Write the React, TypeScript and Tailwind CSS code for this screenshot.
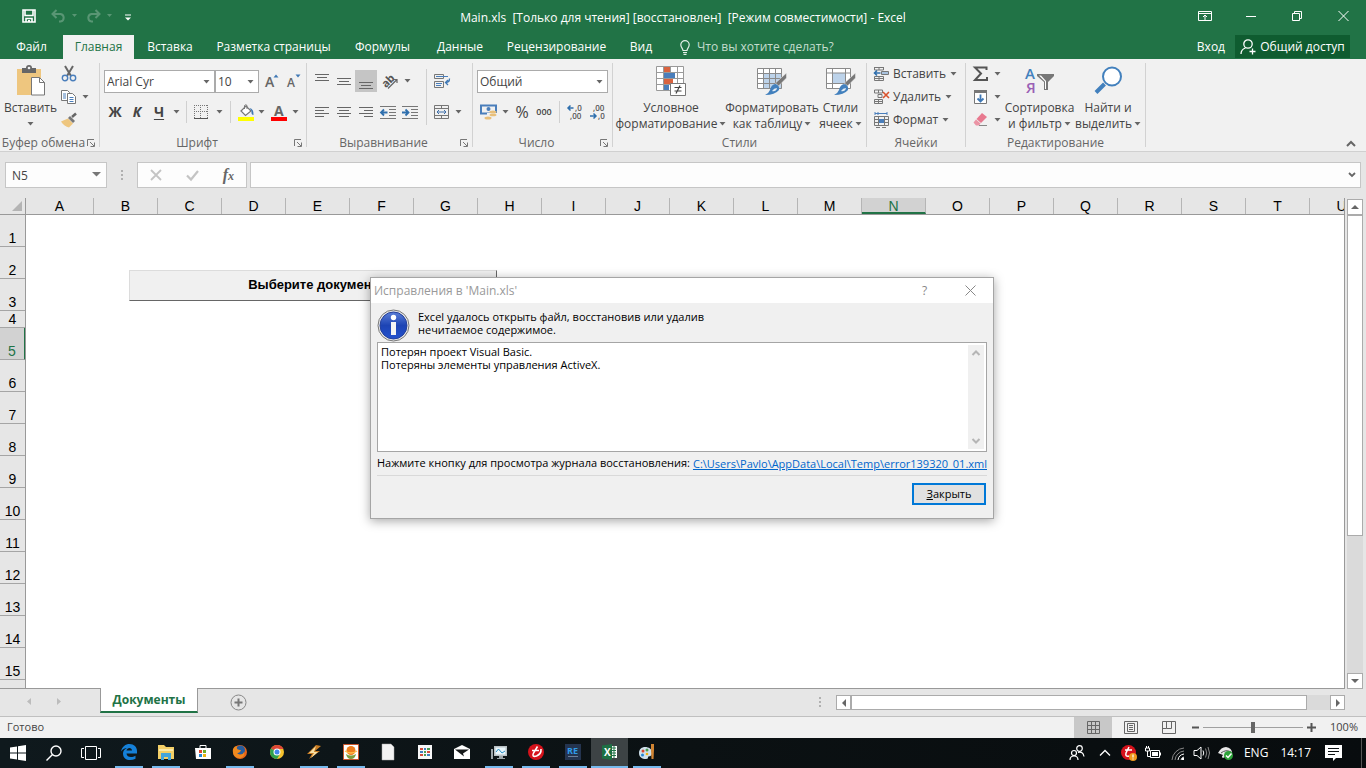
import type { ReactNode } from "react";

const tabs = [
  { label: "Файл", width: "w-[63px]" },
  { label: "Главная", width: "w-[71px]", active: true },
  { label: "Вставка", width: "w-[72px]" },
  { label: "Разметка страницы", width: "w-[135px]" },
  { label: "Формулы", width: "w-[83px]" },
  { label: "Данные", width: "w-[72px]" },
  { label: "Рецензирование", width: "w-[121px]" },
  { label: "Вид", width: "w-12" },
];

const columns = "ABCDEFGHIJKLMNOPQRSTU".split("");
const rows = [1, 2, 3, 4, 5, 6, 7, 8, 9, 10, 11, 12, 13, 14, 15, 16];

export default function App() {
  return (
    <div className="relative flex h-screen flex-col overflow-hidden bg-[#e6e6e6] font-['Open_Sans','Noto_Sans',sans-serif] text-xs text-[#444]">
      <TitleBar />
      <RibbonTabs />
      <Ribbon />
      <FormulaBar />
      <Sheet />
      <SheetTabs />
      <StatusBar />
      <Taskbar />
      <RepairDialog />
    </div>
  );
}

/* ---------- small shared pieces ---------- */

function Caret({ className = "" }: { className?: string }) {
  return (
    <svg width="7" height="4" viewBox="0 0 7 4" className={`shrink-0 ${className}`}>
      <path d="M0.5 0h6L3.5 3.6z" fill="#666" />
    </svg>
  );
}

function Icon({ w = 16, h = 16, children }: { w?: number; h?: number; children: ReactNode }) {
  return (
    <svg width={w} height={h} viewBox={`0 0 ${w} ${h}`} fill="none" className="shrink-0 overflow-visible">
      {children}
    </svg>
  );
}

function Tool({ label, width = "w-[22px]", children }: { label: string; width?: string; children: ReactNode }) {
  return (
    <button aria-label={label} className={`flex h-[22px] shrink-0 items-center justify-center ${width}`}>
      {children}
    </button>
  );
}

function Divider() {
  return <div className="h-[22px] w-px shrink-0 bg-[#d0d0d0]" />;
}

/* ---------- title bar ---------- */

function TitleBar() {
  return (
    <header className="grid h-[35px] shrink-0 grid-cols-[1fr_auto_1fr] items-center bg-[#217346] text-white">
      <div className="flex items-center pl-[22px]">
        <button aria-label="Сохранить" className="-mt-1">
          <Icon w={14} h={14}>
            <path d="M1 1h12v12H1zM3 1v5.500h8V1M4 13V9.500h6V13" stroke="#fff" strokeWidth="1.600" />
            <path d="M6 11h2v2H6z" fill="#fff" />
          </Icon>
        </button>
        <button aria-label="Отменить" className="-mt-1 ml-[15px] flex items-center gap-[5px] opacity-25">
          <Icon w={15} h={14}>
            <path d="M5.500 1L1.500 5l4 4M2 5h7.500a3.800 3.800 0 0 1 0 7.500H8" stroke="#fff" strokeWidth="2" />
          </Icon>
          <svg width="7" height="4"><path d="M1 0h5L3.500 3z" fill="#fff" /></svg>
        </button>
        <button aria-label="Вернуть" className="-mt-1 ml-2 flex items-center gap-[5px] opacity-25">
          <Icon w={15} h={14}>
            <path d="M9.500 1l4 4-4 4M13 5H5.500a3.800 3.800 0 0 0 0 7.500H7" stroke="#fff" strokeWidth="2" />
          </Icon>
          <svg width="7" height="4"><path d="M1 0h5L3.500 3z" fill="#fff" /></svg>
        </button>
        <button aria-label="Настройка панели быстрого доступа" className="ml-3">
          <Icon w={6} h={7}>
            <path d="M0 1h6" stroke="#fff" />
            <path d="M0 3.500h6L3 6.500z" fill="#fff" />
          </Icon>
        </button>
      </div>
      <h1 className="whitespace-pre">Main.xls  [Только для чтения] [восстановлен]  [Режим совместимости] - Excel</h1>
      <div className="flex justify-end pb-1">
        <button aria-label="Параметры отображения ленты" className="flex w-[46px] justify-center">
          <Icon w={14} h={12}>
            <path d="M.5 1.500h13v9H.5zM.5 3.500h13M7 10V5M5 7l2-2 2 2" stroke="#fff" />
          </Icon>
        </button>
        <button aria-label="Свернуть" className="flex w-[46px] items-center justify-center">
          <Icon w={10} h={12}><path d="M0 6.500h10" stroke="#fff" /></Icon>
        </button>
        <button aria-label="Восстановить" className="flex w-[46px] justify-center">
          <Icon w={10} h={12}>
            <path d="M.5 3.500h7v7h-7zM2.500 3V1.500h7v7H8" stroke="#fff" />
          </Icon>
        </button>
        <button aria-label="Закрыть окно" className="flex w-[46px] justify-center">
          <Icon w={11} h={12}><path d="M.5 1l10 10M10.500 1l-10 10" stroke="#fff" /></Icon>
        </button>
      </div>
    </header>
  );
}

function RibbonTabs() {
  return (
    <nav className="flex h-6 shrink-0 bg-[#217346] text-white">
      {tabs.map((tab) => (
        <button
          key={tab.label}
          className={`shrink-0 whitespace-nowrap text-center ${tab.width} ${tab.active ? "bg-[#f1f1f1] text-[#217346]" : ""}`}
        >
          {tab.label}
        </button>
      ))}
      <button className="ml-[15px] flex items-center gap-[7px] text-[#c4ddce]">
        <Icon w={10} h={15}>
          <path d="M3 10.500C3 8.500.8 7.500.8 4.800a4.200 4.200 0 0 1 8.400 0C9.200 7.500 7 8.500 7 10.500zM3 12.500h4M3.500 14.300h3" stroke="#e3efe8" strokeWidth="1.200" />
        </Icon>
        Что вы хотите сделать?
      </button>
      <div className="ml-auto mr-4 flex h-[23px] items-center">
        <a href="#signin" className="mr-[10px]">Вход</a>
        <button className="flex h-full w-[115px] items-center justify-center gap-1 whitespace-nowrap bg-[#0f5c30]">
          <Icon w={16} h={16}>
            <circle cx="8" cy="5" r="4.200" stroke="#fff" strokeWidth="1.300" />
            <path d="M1 15c0-3.200 2-5.200 4.500-6M9.500 12.500h6M12.500 9.500v6" stroke="#fff" strokeWidth="1.300" />
          </Icon>
          Общий доступ
        </button>
      </div>
    </nav>
  );
}

/* ---------- ribbon ---------- */

function Group({ title, width, launcher, children }: { title: string; width: string; launcher?: boolean; children: ReactNode }) {
  return (
    <section className={`flex shrink-0 ${width}`}>
      <div className="flex min-w-0 flex-1 flex-col pt-1">
        <div className="flex h-[72px]">{children}</div>
        <div className="flex h-4 items-center text-[#666]">
          <span className="flex-1 whitespace-nowrap text-center leading-4">{title}</span>
          {launcher && (
            <button aria-label={`${title}: параметры`} className="mr-1">
              <Icon w={8} h={8}>
                <path d="M.5 7V.5H7M3 3l4 4M7.500 3.500v4h-4" stroke="#777" />
              </Icon>
            </button>
          )}
        </div>
      </div>
      <div className="my-1 w-px bg-[#d2d2d2]" />
    </section>
  );
}

function BigButton({ width, icon, lines, caretBelow }: { width: string; icon: ReactNode; lines: string[]; caretBelow?: boolean }) {
  return (
    <button className={`flex shrink-0 flex-col items-center whitespace-nowrap ${width}`}>
      <span className="mb-1 mt-[2px] flex h-[31px] items-center">{icon}</span>
      {lines.map((line, i) => (
        <span key={line} className="flex items-center gap-[2px] leading-4">
          {line}
          {i === 1 && <Caret />}
        </span>
      ))}
      {caretBelow && <Caret className="mt-[6px]" />}
    </button>
  );
}

function Ribbon() {
  return (
    <div className="flex h-[93px] shrink-0 border-b border-[#d0d0d0] bg-[#f1f1f1]">
      <Group title="Буфер обмена" width="w-[100px]" launcher>
        <BigButton width="w-[61px]" icon={<PasteIcon />} lines={["Вставить"]} caretBelow />
        <div className="flex flex-col gap-px">
          <Tool label="Вырезать" width="w-4"><CutIcon /></Tool>
          <Tool label="Копировать" width="w-[28px]"><span className="flex items-center gap-[5px]"><CopyIcon /><Caret /></span></Tool>
          <Tool label="Формат по образцу" width="w-4"><BrushIcon /></Tool>
        </div>
      </Group>

      <Group title="Шрифт" width="w-[207px]" launcher>
        <div className="flex flex-col gap-2 pl-1 pt-[7px]">
          <div className="flex items-center">
            <Combo label="Название шрифта" value="Arial Cyr" width="w-[111px]" />
            <Combo label="Размер шрифта" value="10" width="w-[44px]" />
            <div className="w-[2px]" />
            <Tool label="Увеличить размер шрифта"><GrowFontIcon up /></Tool>
            <Tool label="Уменьшить размер шрифта"><GrowFontIcon /></Tool>
          </div>
          <div className="flex items-center">
            <Tool label="Полужирный"><b className="text-sm">Ж</b></Tool>
            <Tool label="Курсив"><b className="text-sm italic">К</b></Tool>
            <Tool label="Подчёркнутый" width="w-[38px]"><b className="mr-[9px] text-sm underline underline-offset-2">Ч</b><Caret /></Tool>
            <Divider />
            <Tool label="Границы" width="w-[43px]"><span className="flex items-center gap-2"><BordersIcon /><Caret /></span></Tool>
            <Divider />
            <Tool label="Цвет заливки" width="w-[40px]"><span className="flex items-center gap-1"><FillIcon /><Caret /></span></Tool>
            <Tool label="Цвет текста" width="w-[28px]"><span className="flex items-center gap-[5px]"><FontColorIcon /><Caret /></span></Tool>
          </div>
        </div>
      </Group>

      <Group title="Выравнивание" width="w-[166px]" launcher>
        <div className="flex flex-col gap-[9px] pl-1 pt-[7px]">
          <div className="flex items-center">
            <Tool label="По верхнему краю"><LinesIcon d="M0 1.500h14M2 4.500h10M0 7.500h14" /></Tool>
            <Tool label="По середине"><LinesIcon d="M0 5.500h14M2 8.500h10M0 11.500h14" /></Tool>
            <button aria-label="По нижнему краю" className="flex h-[22px] w-[22px] items-center justify-center bg-[#c5c5c5]">
              <LinesIcon d="M0 9.500h14M2 12.500h10M0 15.500h14" />
            </button>
            <Tool label="Ориентация" width="w-[38px]">
              <span className="flex items-center gap-1">
                <Icon w={18} h={16}>
                  <text x="0" y="12" transform="rotate(-45 6 9)" fontSize="11" fontWeight="700" fill="#555">ab</text>
                  <path d="M6 15.500l9-9M11.500 6.500H15V10" stroke="#666" strokeWidth="1.200" />
                </Icon>
                <Caret />
              </span>
            </Tool>
          </div>
          <div className="flex items-center">
            <Tool label="По левому краю"><LinesIcon d="M0 3.500h14M0 6.500h9M0 9.500h14M0 12.500h9" /></Tool>
            <Tool label="По центру"><LinesIcon d="M0 3.500h14M2 6.500h10M0 9.500h14M2 12.500h10" /></Tool>
            <Tool label="По правому краю"><LinesIcon d="M0 3.500h14M5 6.500h9M0 9.500h14M5 12.500h9" /></Tool>
            <Tool label="Уменьшить отступ"><IndentIcon left /></Tool>
            <Tool label="Увеличить отступ"><IndentIcon /></Tool>
          </div>
        </div>
        <div className="ml-[5px] mt-[6px] h-14 w-px bg-[#d0d0d0]" />
        <div className="flex flex-col gap-[9px] pl-[7px] pt-[7px]">
          <Tool label="Перенести текст" width="w-4">
            <Icon>
              <path d="M.5 1.500h9v4h-9zM.5 8.500h9v6h-9z" stroke="#777" />
              <path d="M2 3.500h12M2 10.500h6M2 12.500h5" stroke="#4a7ebb" />
              <path d="M15.500 5.500q0 4-3.500 4M14 7l-2.500 2.500L14 12" stroke="#3f78b5" strokeWidth="1.300" />
            </Icon>
          </Tool>
          <Tool label="Объединить и поместить в центре" width="w-[28px]">
            <span className="flex items-center gap-[5px]">
              <Icon>
                <path d="M.5 1.500h14v13H.5zM.5 4.500h14M.5 11.500h14M7.500 1.500v3M7.500 11.500v3" stroke="#777" />
                <path d="M3 8h9M5 6L3 8l2 2M10 6l2 2-2 2" stroke="#3f6fa8" />
              </Icon>
              <Caret />
            </span>
          </Tool>
        </div>
      </Group>

      <Group title="Число" width="w-[140px]" launcher>
        <div className="flex flex-col gap-2 pl-1 pt-[7px]">
          <Combo label="Числовой формат" value="Общий" width="w-[131px]" />
          <div className="flex items-center">
            <Tool label="Финансовый числовой формат" width="w-[34px]">
              <span className="flex items-center gap-1">
                <Icon w={18} h={16}>
                  <path d="M1 1.500h15v8H1z" stroke="#4a7ebb" strokeWidth="2" />
                  <circle cx="8.500" cy="5" r="2" fill="#4a7ebb" />
                  <path d="M7 9h10v6H7z" fill="#f1f1f1" />
                  <ellipse cx="13" cy="8" rx="3.500" ry="1.500" fill="#e8bf7a" />
                  <ellipse cx="13" cy="11" rx="3.500" ry="1.300" fill="#e8bf7a" />
                  <ellipse cx="8" cy="14" rx="3.500" ry="1.500" fill="#e8bf7a" />
                </Icon>
                <Caret />
              </span>
            </Tool>
            <Tool label="Процентный формат"><span className="text-base">%</span></Tool>
            <Tool label="Формат с разделителями"><span className="text-[9px] font-semibold">000</span></Tool>
            <div className="w-1" />
            <Divider />
            <Tool label="Увеличить разрядность" width="w-[30px]"><DecimalIcon more /></Tool>
            <Tool label="Уменьшить разрядность" width="w-4"><DecimalIcon /></Tool>
          </div>
        </div>
      </Group>

      <Group title="Стили" width="w-[254px]">
        <BigButton width="w-[116px]" icon={<ConditionalIcon />} lines={["Условное", "форматирование"]} />
        <BigButton width="w-[86px]" icon={<TableStyleIcon />} lines={["Форматировать", "как таблицу"]} />
        <BigButton width="w-[51px]" icon={<TableStyleIcon cell />} lines={["Стили", "ячеек"]} />
      </Group>

      <Group title="Ячейки" width="w-[99px]">
        <div className="flex flex-col gap-px pl-[7px]">
          <CellsButton label="Вставить">
            <Icon>
              <path d="M.5 1.500h9M.5 1v3h9V1M5 1v3M.5 10.500h9v4h-9zM5 10.500v4M.5 12.500h9" stroke="#777" />
              <path d="M7.500 5.500h7v3h-7z" fill="#a9c3df" stroke="#777" />
              <path d="M6.500 7H1M3 4.500L.5 7 3 9.500" stroke="#2f6fad" strokeWidth="1.600" />
            </Icon>
          </CellsButton>
          <CellsButton label="Удалить">
            <Icon>
              <path d="M.5 1h8v3h-8zM4.500 1v3M4 5.500h4v3H4zM.5 10.500h8v4h-8zM4.500 10.500v4M.5 12.500h8" stroke="#777" />
              <path d="M9 3l6 6M15 3L9 9" stroke="#d9532c" strokeWidth="1.600" />
            </Icon>
          </CellsButton>
          <CellsButton label="Формат">
            <Icon>
              <path d="M1 1.500h12M1 0v3M13 0v3M4 0v3" stroke="#4a7ebb" />
              <path d="M.5 4.500h14v9H.5zM.5 7.500h14M.5 10.500h14M4.500 4.500v9M10.500 4.500v9" stroke="#777" />
              <path d="M5 7h5v4H5z" fill="#4a7ebb" />
              <path d="M2 15.500h4M8 15.500h4" stroke="#777" />
            </Icon>
          </CellsButton>
        </div>
      </Group>

      <Group title="Редактирование" width="w-[180px]">
        <div className="flex flex-col gap-px pl-[7px]">
          <Tool label="Автосумма" width="w-[28px]">
            <span className="flex items-center gap-[5px]">
              <Icon><path d="M13.500 4V1.500H2L8 7.500l-6 6.500h12V11" stroke="#555" strokeWidth="2" /></Icon>
              <Caret />
            </span>
          </Tool>
          <Tool label="Заполнить" width="w-[28px]">
            <span className="flex items-center gap-[5px]">
              <Icon>
                <path d="M1.500 2.500h12v12h-12z" fill="#fff" stroke="#777" />
                <path d="M1 1h13v3H1z" fill="#777" />
                <path d="M7.500 5.500v7M4.500 9.500l3 3 3-3" stroke="#3f78b5" strokeWidth="1.800" />
              </Icon>
              <Caret />
            </span>
          </Tool>
          <Tool label="Очистить" width="w-[28px]">
            <span className="flex items-center gap-[5px]">
              <Icon>
                <path d="M9 1l5 4-6 6-4.500-4z" fill="#e8798f" />
                <path d="M3 7.500l4.500 4-1.500 2H3L.5 10.500z" fill="#eb94a5" />
                <path d="M6 13.500h8" stroke="#888" />
              </Icon>
              <Caret />
            </span>
          </Tool>
        </div>
        <BigButton width="w-[77px]" icon={<SortIcon />} lines={["Сортировка", "и фильтр"]} />
        <BigButton width="w-[60px]" icon={<FindIcon />} lines={["Найти и", "выделить"]} />
      </Group>

      <button aria-label="Свернуть ленту" className="mb-1 ml-auto mr-[10px] self-end">
        <Icon w={10} h={7}><path d="M1 6l4-4 4 4" stroke="#666" strokeWidth="2" /></Icon>
      </button>
    </div>
  );
}

function Combo({ label, value, width }: { label: string; value: string; width: string }) {
  return (
    <div className={`relative h-[23px] shrink-0 border border-[#ababab] bg-white ${width}`}>
      <select aria-label={label} className="h-full w-full appearance-none pl-[2px] leading-5 outline-none">
        <option>{value}</option>
      </select>
      <Caret className="pointer-events-none absolute right-1 top-[9px]" />
    </div>
  );
}

function CellsButton({ label, children }: { label: string; children: ReactNode }) {
  return (
    <button className="flex h-[22px] items-center whitespace-nowrap">
      {children}
      <span className="ml-[3px]">{label}</span>
      <Caret className="ml-1" />
    </button>
  );
}

/* ---------- ribbon icons ---------- */

function PasteIcon() {
  return (
    <Icon w={30} h={31}>
      <path d="M1 4h24v26H1z" fill="#eec67f" />
      <path d="M6 3h4a3 3 0 0 1 6 0h4v5H6z" fill="#666" />
      <circle cx="13" cy="3" r="1.300" fill="#f1f1f1" />
      <path d="M15.500 12.500h8l5 5v12.500h-13z" fill="#fff" stroke="#777" />
      <path d="M23.500 12.500v5h5" stroke="#777" />
    </Icon>
  );
}

function CutIcon() {
  return (
    <Icon>
      <path d="M4 0l6 10M12 0L6 10" stroke="#666" strokeWidth="2" />
      <circle cx="4" cy="12" r="2.700" stroke="#4a7ebb" strokeWidth="1.400" />
      <circle cx="12" cy="12" r="2.700" stroke="#4a7ebb" strokeWidth="1.400" />
    </Icon>
  );
}

function CopyIcon() {
  return (
    <Icon>
      <path d="M.5 1.500h6l2 2v8h-8z" fill="#fff" stroke="#777" />
      <path d="M6.500 4.500h5l3 3v7h-8z" fill="#fff" stroke="#777" />
      <path d="M2 5h3M2 7h3M2 9h3M8.500 8.500h4M8.500 10.500h4M8.500 12.500h4" stroke="#4a7ebb" />
    </Icon>
  );
}

function BrushIcon() {
  return (
    <Icon>
      <path d="M0 9.500l7-3 5 5-4 4c-3-.5-6-3-8-6z" fill="#eec67f" />
      <path d="M7 6l2-2 5 5-2 2z" fill="#777" />
      <path d="M11 5l4-3.500" stroke="#666" strokeWidth="2.500" />
    </Icon>
  );
}

function GrowFontIcon({ up }: { up?: boolean }) {
  return (
    <Icon w={14} h={16}>
      <text x="0" y="13" fontSize={up ? 14 : 12} fontWeight="600" fill="#666">A</text>
      {up ? <path d="M8.500 3.500L11 .5l2.500 3z" fill="#3f78b5" /> : <path d="M8.500 .5h5l-2.500 3z" fill="#3f78b5" />}
    </Icon>
  );
}

function BordersIcon() {
  return (
    <Icon w={14} h={14}>
      <path d="M.5 0v13M13.500 0v13M6.500 0v13M0 .5h14M0 6.500h14" stroke="#777" strokeDasharray="1 1" />
      <path d="M0 13.500h14" stroke="#555" />
    </Icon>
  );
}

function FillIcon() {
  return (
    <Icon w={16} h={17}>
      <path d="M3 7l5-5 5 5-5.500 4.500z" fill="#fff" stroke="#777" strokeWidth="1.200" />
      <path d="M6.500 5V1.500q1.500-1.500 2.500 0V5" stroke="#777" />
      <path d="M11.500 4q4.500 1 4 7-2.500 0-2-4z" fill="#3f78b5" />
      <path d="M0 13h16v4H0z" fill="#ff0" />
    </Icon>
  );
}

function FontColorIcon() {
  return (
    <Icon w={16} h={17}>
      <text x="3" y="12" fontSize="14" fontWeight="700" fill="#666">A</text>
      <path d="M0 13h16v4H0z" fill="#f00" />
    </Icon>
  );
}

function LinesIcon({ d }: { d: string }) {
  return <Icon w={14} h={16}><path d={d} stroke="#666" /></Icon>;
}

function IndentIcon({ left }: { left?: boolean }) {
  return (
    <Icon>
      <path d="M0 2.500h16M9 5.500h7M9 8.500h7M9 11.500h7M0 14.500h16" stroke="#777" />
      <path d={left ? "M7.500 8.500H1.500M4 5.500l-3 3 3 3" : "M0 8.500h6M3.500 5.500l3 3-3 3"} stroke="#2f6fad" strokeWidth="1.800" />
    </Icon>
  );
}

function DecimalIcon({ more }: { more?: boolean }) {
  return (
    <Icon w={16} h={16}>
      <text x={more ? 8 : 3} y="7" fontSize="8" fontWeight="600" fill="#555">{more ? ",0" : ",00"}</text>
      <text x={more ? 3 : 8} y="15" fontSize="8" fontWeight="600" fill="#555">{more ? ",00" : ",0"}</text>
      <path d={more ? "M6.500 4H1M3.500 1.500L1 4l2.500 2.500" : "M0 12h6M3.500 9.500L6 12l-2.500 2.500"} stroke="#2f6fad" strokeWidth="1.500" />
    </Icon>
  );
}

function ConditionalIcon() {
  return (
    <Icon w={30} h={31}>
      <path d="M.5 1.500h27v24H.5z" fill="#fff" />
      <path d="M.5 1.500h27v24H.5zM.5 7.500h27M.5 13.500h27M.5 19.500h27M7.500 1.500v24M14.500 1.500v24M21.500 1.500v24" stroke="#999" />
      <path d="M8 2h6v5H8zM8 14h9v5H8z" fill="#d9633f" />
      <path d="M8 8h11v5H8zM8 20h5v5H8z" fill="#4a7ebb" />
      <path d="M14.500 18.500h15v12h-15z" fill="#fff" stroke="#777" />
      <path d="M18.500 22.500h7M18.500 26h7M24 20.500l-4 8" stroke="#444" strokeWidth="1.200" />
    </Icon>
  );
}

function TableStyleIcon({ cell }: { cell?: boolean }) {
  return (
    <Icon w={30} h={31}>
      <path d="M.5 3.500h24v20H.5z" fill="#fff" />
      <path d={cell ? "M6 8h14v10H6z" : "M7 9h18v15H7z"} fill="#bdd3ea" />
      <path
        d={cell ? "M.5 3.500h24v20H.5zM.5 8h24M.5 18.500h24M6.500 3.500v20M19.500 3.500v20" : "M.5 3.500h24v20H.5zM.5 8.500h24M.5 13.500h24M.5 18.500h24M6.500 3.500v20M12.500 3.500v20M18.500 3.500v20"}
        stroke="#8a8a8a"
      />
      <path d="M29.500 8v5l-8 8-3-3z" fill="#777" stroke="#f1f1f1" strokeWidth=".5" />
      <path d="M18 19q5 1 4 6-4 5-14 5 4-2 5-5 1-5 5-6z" fill="#4280bd" />
      <path d="M15 26q2-3 5-3-1 4-5 3z" fill="#e2ecf6" />
    </Icon>
  );
}

function SortIcon() {
  return (
    <Icon w={30} h={31}>
      <text x="0" y="14" fontSize="15" fontWeight="600" fill="#4280bd">А</text>
      <text x="1" y="28" fontSize="15" fontWeight="600" fill="#9a5fb5">Я</text>
      <path d="M12 9h17v2l-6 6v8h-4v-8l-7-6z" fill="#777" />
      <path d="M14 10.500l6 6V24h1v-8l-5-5.500z" fill="#fff" />
    </Icon>
  );
}

function FindIcon() {
  return (
    <Icon w={30} h={31}>
      <path d="M11.500 19L3 27.500" stroke="#4280bd" strokeWidth="4" />
      <circle cx="19" cy="11.500" r="9" fill="#fff" stroke="#4280bd" strokeWidth="2" />
    </Icon>
  );
}

/* ---------- formula bar ---------- */

function FormulaBar() {
  return (
    <div className="mt-[10px] flex h-[26px] shrink-0 items-stretch pl-[5px] pr-[5px]">
      <div className="relative w-[102px] border border-[#c6c6c6] bg-[#fdfdfd]">
        <input aria-label="Имя" defaultValue="N5" className="h-full w-full bg-transparent pl-[6px] outline-none" />
        <svg width="9" height="5" className="absolute right-[5px] top-[9px]"><path d="M0 0h9L4.500 4.500z" fill="#777" /></svg>
      </div>
      <div className="flex w-[30px] items-center justify-center">
        <Icon w={2} h={10}><path d="M0 0h2v2H0zM0 4h2v2H0zM0 8h2v2H0z" fill="#b0b0b0" /></Icon>
      </div>
      <div className="flex w-[110px] items-center justify-around border border-[#c6c6c6] bg-[#fdfdfd]">
        <button aria-label="Отмена">
          <Icon w={12} h={12}><path d="M1 1l10 10M11 1L1 11" stroke="#c4c4c4" strokeWidth="1.800" /></Icon>
        </button>
        <button aria-label="Ввод">
          <Icon w={13} h={12}><path d="M1 6.500l4 4L12 2" stroke="#c4c4c4" strokeWidth="2.200" /></Icon>
        </button>
        <button aria-label="Вставить функцию" className="font-['Liberation_Serif',serif] text-base font-bold italic leading-5 text-[#666]">
          f<span className="text-xs">x</span>
        </button>
      </div>
      <div className="relative ml-[3px] flex-1 border border-[#c6c6c6] bg-[#fdfdfd]">
        <input aria-label="Строка формул" className="h-full w-full bg-transparent px-2 outline-none" />
        <svg width="8" height="6" fill="none" className="absolute right-1 top-[9px]"><path d="M1 1l3 3 3-3" stroke="#666" strokeWidth="1.800" /></svg>
      </div>
    </div>
  );
}

/* ---------- worksheet ---------- */

function Sheet() {
  return (
    <main className="mt-[10px] flex min-h-0 flex-1 font-['Liberation_Sans',Arial,sans-serif] text-sm text-black">
      <div className="flex w-[26px] shrink-0 flex-col overflow-hidden border-b border-r border-[#999]">
        <div className="flex h-[17px] shrink-0 items-end justify-end border-b border-[#999] pb-[3px] pr-[3px]">
          <Icon w={10} h={10}><path d="M10 0v10H0z" fill="#b4b4b4" /></Icon>
        </div>
        {rows.map((row) => (
          <div
            key={row}
            className={`flex shrink-0 items-end justify-center border-b leading-[15px] ${row === 4 ? "h-[17px]" : "h-8"} ${
              row === 5 ? "-mr-px border-r-2 border-b-[#a5a5a5] border-r-[#217346] bg-[#d2d2d2] text-[#217346]" : "border-[#a5a5a5]"
            }`}
          >
            {row}
          </div>
        ))}
      </div>

      <div className="flex min-w-0 flex-1 flex-col border-b border-r border-[#999]">
        <div className="flex h-[17px] shrink-0 overflow-hidden border-b border-[#999]">
          {columns.map((col) => (
            <div
              key={col}
              className={`flex shrink-0 items-start justify-center border-r border-[#b5b5b5] leading-[17px] ${col === "A" ? "w-[68px]" : "w-16"} ${
                col === "N" ? "border-b-2 border-b-[#217346] bg-[#d2d2d2] text-[#217346]" : ""
              }`}
            >
              {col}
            </div>
          ))}
        </div>
        <div className="flex-1 bg-white pl-[103px] pt-[55px]">
          <button className="h-[31px] w-[368px] border border-b-[#666] border-l-[#dcdcdc] border-r-[#666] border-t-[#dcdcdc] bg-[#f0f0f0] text-[13px] font-bold">
            Выберите документ
          </button>
        </div>
      </div>

      <div className="ml-[2px] mr-[3px] mt-px flex w-4 shrink-0 flex-col bg-[#dadada]">
        <button aria-label="Вверх" className="flex h-4 shrink-0 items-center justify-center border border-[#ababab] bg-white">
          <Icon w={8} h={4}><path d="M0 4l4-4 4 4z" fill="#666" /></Icon>
        </button>
        <div className="h-[321px] shrink-0 border border-[#ababab] bg-white" />
        <button aria-label="Вниз" className="mt-auto flex h-4 shrink-0 items-center justify-center border border-[#ababab] bg-white">
          <Icon w={8} h={4}><path d="M0 0h8L4 4z" fill="#666" /></Icon>
        </button>
      </div>
    </main>
  );
}

function SheetTabs() {
  return (
    <div className="flex h-[27px] shrink-0 items-start">
      <div className="flex w-[100px] gap-6 pl-[27px] pt-2">
        <Icon w={5} h={9}><path d="M4 1v7L0 4.500z" fill="#bcbcbc" /></Icon>
        <Icon w={5} h={9}><path d="M1 1v7l4-3.500z" fill="#bcbcbc" /></Icon>
      </div>
      <button className="-mt-px h-[25px] w-[98px] border-x border-b-2 border-x-[#999] border-b-[#217346] bg-white pt-px font-bold text-[#217346]">
        Документы
      </button>
      <button aria-label="Новый лист" className="ml-8 mt-[5px]">
        <Icon w={17} h={17}>
          <circle cx="8.500" cy="8.500" r="7.500" stroke="#888" />
          <path d="M4.500 8.500h8M8.500 4.500v8" stroke="#777" strokeWidth="2" />
        </Icon>
      </button>
      <div className="ml-auto mr-[15px] mt-2">
        <Icon w={2} h={10}><path d="M0 0h2v2H0zM0 4h2v2H0zM0 8h2v2H0z" fill="#b0b0b0" /></Icon>
      </div>
      <div className="mr-[21px] mt-[6px] flex h-[15px] w-[509px] bg-[#dadada]">
        <button aria-label="Влево" className="flex w-[15px] items-center justify-center border border-[#ababab] bg-white">
          <Icon w={4} h={8}><path d="M4 0v8L0 4z" fill="#666" /></Icon>
        </button>
        <div className="w-[456px] border border-[#ababab] bg-white" />
        <button aria-label="Вправо" className="ml-auto flex w-[15px] items-center justify-center border border-[#ababab] bg-white">
          <Icon w={4} h={8}><path d="M0 0v8l4-4z" fill="#666" /></Icon>
        </button>
      </div>
    </div>
  );
}

function StatusBar() {
  return (
    <footer className="flex h-[22px] shrink-0 items-center border-t border-[#c0c0c0] bg-[#f1f1f1] pl-[7px] text-[11px]">
      <span>Готово</span>
      <button aria-label="Обычный" className="ml-auto flex h-full w-[38px] items-center justify-center bg-[#c8c8c8]">
        <Icon w={13} h={13}><path d="M.5.5h12v12H.5zM.5 4.500h12M.5 8.500h12M4.500.5v12M8.500.5v12" stroke="#666" /></Icon>
      </button>
      <button aria-label="Разметка страницы, вид" className="flex w-[38px] justify-center">
        <Icon w={14} h={13}><path d="M.5.5h13v12H.5zM3.500 2.500h7v8h-7zM5 4.500h4M5 6.500h4M5 8.500h4" stroke="#666" /></Icon>
      </button>
      <button aria-label="Страничный" className="flex w-[38px] justify-center">
        <Icon w={14} h={13}><path d="M.5.5h13v12H.5zM4.500.5v7H.5M4.500 7.500h5v-7" stroke="#666" /></Icon>
      </button>
      <button aria-label="Уменьшить" className="ml-1"><Icon w={7} h={9}><path d="M0 4.500h7" stroke="#555" strokeWidth="2" /></Icon></button>
      <input
        type="range"
        aria-label="Масштаб"
        defaultValue={50}
        className="mx-1 h-px w-[100px] appearance-none bg-[#a0a0a0] [&::-webkit-slider-thumb]:h-[11px] [&::-webkit-slider-thumb]:w-1 [&::-webkit-slider-thumb]:appearance-none [&::-webkit-slider-thumb]:bg-[#666]"
      />
      <button aria-label="Увеличить"><Icon w={9} h={9}><path d="M0 4.500h9M4.500 0v9" stroke="#555" strokeWidth="2" /></Icon></button>
      <span className="w-[50px] pr-2 text-right">100%</span>
    </footer>
  );
}

/* ---------- repair dialog ---------- */

function RepairDialog() {
  return (
    <div
      role="dialog"
      aria-labelledby="repair-title"
      className="absolute left-[370px] top-[277px] flex h-[242px] w-[624px] flex-col border border-[#a5a5a5] bg-[#f0f0f0] text-[11px] leading-[13px] text-black shadow-[0_2px_10px_rgba(0,0,0,0.35)]"
    >
      <div className="flex h-[25px] shrink-0 items-center bg-white pl-[3px] text-xs text-[#999]">
        <h2 id="repair-title">Исправления в 'Main.xls'</h2>
        <button aria-label="Справка" className="ml-auto w-[45px] text-[#888]">?</button>
        <button aria-label="Закрыть диалог" className="flex w-[46px] justify-center">
          <Icon w={11} h={11}><path d="M.5.5l10 10M10.500.5l-10 10" stroke="#888" /></Icon>
        </button>
      </div>
      <div className="flex flex-1 flex-col px-[6px] pt-[6px]">
        <div className="flex h-[33px]">
          <svg width="33" height="33" viewBox="0 0 33 33" className="shrink-0">
            <defs>
              <linearGradient id="info" x1="0" y1="0" x2="0" y2="1">
                <stop offset="0" stopColor="#5b7fd8" />
                <stop offset="0.5" stopColor="#1d44b4" />
                <stop offset="1" stopColor="#2452cf" />
              </linearGradient>
            </defs>
            <circle cx="16.500" cy="16.500" r="15.500" fill="#e8e8e8" stroke="#777" />
            <circle cx="16.500" cy="16.500" r="13.500" fill="url(#info)" stroke="#24409a" />
            <circle cx="16.500" cy="8.500" r="2.700" fill="#fff" />
            <path d="M14 13h5v13h-5z" fill="#f4f4f4" />
          </svg>
          <p className="pl-2 pt-px">
            Excel удалось открыть файл, восстановив или удалив
            <br />
            нечитаемое содержимое.
          </p>
        </div>
        <div className="flex h-[110px] border border-[#a5a5a5] bg-white p-[2px]">
          <textarea
            readOnly
            aria-label="Сведения о восстановлении"
            className="flex-1 resize-none overflow-hidden whitespace-pre pl-px outline-none"
            defaultValue={"Потерян проект Visual Basic.\nПотеряны элементы управления ActiveX."}
          />
          <div className="flex w-4 flex-col items-center justify-between bg-[#f0f0f0] py-[5px]">
            <Icon w={8} h={6}><path d="M.5 5L4 1.500 7.500 5" stroke="#b5b5b5" strokeWidth="2" /></Icon>
            <Icon w={8} h={6}><path d="M.5 1L4 4.500 7.500 1" stroke="#b5b5b5" strokeWidth="2" /></Icon>
          </div>
        </div>
        <div className="flex h-6 items-center justify-between whitespace-nowrap border-b border-[#d9d9d9]">
          <span className="pb-[2px]">Нажмите кнопку для просмотра журнала восстановления:</span>
          <a href="#log" className="text-[#0066cc] underline">C:\Users\Pavlo\AppData\Local\Temp\error139320_01.xml</a>
        </div>
        <button className="mr-px mt-[7px] h-[22px] w-[74px] self-end border-2 border-[#0078d7] bg-[#e1e1e1] pb-px">
          <u>З</u>акрыть
        </button>
      </div>
    </div>
  );
}

/* ---------- taskbar ---------- */

const apps: { name: string; open?: boolean; active?: boolean; icon: ReactNode }[] = [
  {
    name: "Edge",
    open: true,
    icon: <path d="M0 7.500C1 2.500 4.500 0 8.500 0c4.500 0 7.500 3 7.500 7v2.500H5.500c.2 4 5.500 4.500 9 2.200v3C9 17.500 2 16 2 9.500c0-2.500 1.500-4.500 4-5.500C3.500 4 1.500 5.500 0 7.500zM5.500 6.500H11C11 3 6 3 5.500 6.500z" fill="#1580d8" />,
  },
  {
    name: "Проводник",
    open: true,
    icon: (
      <>
        <path d="M0 1h6l2 2h8v12H0z" fill="#f3cf67" />
        <path d="M1 5h14v2H1z" fill="#fbe9a8" />
        <path d="M3 16V9h10v7h-3v-3H6v3z" fill="#43a5dc" />
      </>
    ),
  },
  {
    name: "Магазин",
    icon: (
      <>
        <path d="M5 4V1.500h6V4" stroke="#fff" />
        <path d="M0 4h16v11H1z" fill="#fff" />
        <path d="M4 6h3v3H4z" fill="#e0452c" />
        <path d="M8 6h3v3H8z" fill="#6fae2b" />
        <path d="M4 10h3v3H4z" fill="#2586d3" />
        <path d="M8 10h3v3H8z" fill="#eeb211" />
      </>
    ),
  },
  {
    name: "Firefox",
    open: true,
    icon: (
      <>
        <circle cx="8" cy="8" r="7" fill="#e8651a" />
        <circle cx="8.500" cy="6" r="4.500" fill="#275d9e" />
        <path d="M1 5c1-2 2-3 4-3-1 3 1 4 4 4-1 3-3 3-4 3 2 3 6 2 7-1 1 4-2 6-5 6C3 14 0 10 1 5z" fill="#f08a1f" />
      </>
    ),
  },
  {
    name: "Chrome",
    icon: (
      <>
        <circle cx="8" cy="8" r="7" fill="#f5c22d" />
        <path d="M8 8L2 4.500A7 7 0 0 1 14.500 5H8z" fill="#dd4636" />
        <path d="M8 8L2 4.500A7 7 0 0 0 8 15l3-5z" fill="#2fa14f" />
        <circle cx="8" cy="8" r="3.500" fill="#fff" />
        <circle cx="8" cy="8" r="2.500" fill="#4287ec" />
      </>
    ),
  },
  {
    name: "Winamp",
    open: true,
    icon: (
      <>
        <path d="M10 1L1 10h5l-3 5 11-8H9l6-5z" fill="#c97c22" />
        <path d="M10 2L3 9h5l-3 5 7-6H8z" fill="#f7dfa4" />
      </>
    ),
  },
  {
    name: "Viewer",
    open: true,
    icon: (
      <>
        <path d="M.5.5h15v15H.5z" fill="#fff" stroke="#c9562c" />
        <circle cx="8" cy="6.500" r="4.500" fill="#ee7d1d" />
        <path d="M3 10q5 3 10 0-1 5-5 5t-5-5z" fill="#7d9c3c" />
        <path d="M2 7q6 4 12 0" stroke="#ffc14a" strokeWidth="1.500" />
      </>
    ),
  },
  { name: "Документ", icon: <path d="M2 0h9l3 3v13H2z" fill="#f3f3f3" stroke="#aaa" strokeWidth=".5" /> },
  {
    name: "Календарь",
    icon: (
      <>
        <path d="M1 1h14v14H1z" fill="#f8f8f8" />
        <path d="M3 4h3v2H3zM10 7h3v2h-3zM3 10h3v2H3z" fill="#d34b3b" />
        <path d="M7 4h2v2H7zM3 7h3v2H3zM10 10h3v2h-3z" fill="#3f7fbf" />
        <path d="M10 4h3v2h-3zM7 7h2v2H7zM7 10h2v2H7z" fill="#4b9a52" />
      </>
    ),
  },
  {
    name: "Почта",
    icon: (
      <>
        <path d="M0 5l8-4 8 4v10H0z" fill="#fff" />
        <path d="M1 5.500h14L9 9.500l1 3z" fill="#16191a" />
      </>
    ),
  },
  {
    name: "Монитор",
    open: true,
    icon: (
      <>
        <path d="M3 2h13v10H3z" fill="#b8c0c4" />
        <path d="M4.500 3.500h10v7h-10z" fill="#eaf6fb" />
        <path d="M5 8l2.500-3L11 9l3-2" stroke="#2a8fc4" />
        <path d="M8 12h4v2H8zM6 14h8v1H6zM0 5h2v10H0z" fill="#9ca4a8" />
      </>
    ),
  },
  {
    name: "Trend Micro",
    open: true,
    icon: (
      <>
        <circle cx="8" cy="8" r="8" fill="#d5121b" />
        <path d="M9.500 2.500L5.500 9q-2 4.500 3 3 5-2 4.500-7M4 6.500h7" stroke="#fff" strokeWidth="1.600" />
      </>
    ),
  },
  {
    name: "RE",
    open: true,
    icon: (
      <>
        <path d="M0 0h16v16H0z" fill="#24344f" />
        <text x="2" y="10" fontSize="9" fontWeight="700" fill="#2f9be8">RE</text>
        <path d="M3 12.500h10" stroke="#6d7f99" />
      </>
    ),
  },
  {
    name: "Excel",
    active: true,
    icon: (
      <>
        <path d="M9 2h6v12H9z" fill="#fff" />
        <path d="M10 4h4M10 6.500h4M10 9h4M10 11.500h4M12 2v12" stroke="#217346" />
        <path d="M0 1.500L10 0v16L0 14.500z" fill="#1d7044" />
        <text x="2" y="12" fontSize="10" fontWeight="700" fill="#fff">X</text>
      </>
    ),
  },
  {
    name: "Paint",
    open: true,
    icon: (
      <>
        <path d="M6 3c4 0 7 2 7 6s-4 3-4 4 0 2-2 2c-4 0-7-2-7-6s3-6 6-6z" fill="#cfe0ea" />
        <circle cx="4" cy="7" r="1.500" fill="#d8442f" />
        <circle cx="8" cy="6" r="1.500" fill="#4b9a52" />
        <circle cx="3.500" cy="11" r="1.500" fill="#2586d3" />
        <circle cx="8" cy="10" r="1.300" fill="#eeb211" />
        <path d="M12 0h3v6l-.5 9h-2L12 6z" fill="#d08432" />
      </>
    ),
  },
];

function Taskbar() {
  return (
    <div className="flex h-[30px] shrink-0 bg-gradient-to-r from-[#0f191d] via-[#0b1113] to-[#080c0e] text-white">
      <button aria-label="Пуск" className="flex w-9 items-center justify-center">
        <Icon><path d="M0 2.500L7 1.500v6H0zM8 1.300L16 0v7.500H8zM0 8.500h7v6l-7-1zM8 8.500h8V16l-8-1.300z" fill="#fff" /></Icon>
      </button>
      <button aria-label="Поиск" className="flex w-9 items-center justify-center">
        <Icon>
          <circle cx="10" cy="6" r="5" stroke="#fff" strokeWidth="1.400" />
          <path d="M6.500 9.500L.5 15.500" stroke="#fff" strokeWidth="1.400" />
        </Icon>
      </button>
      <button aria-label="Представление задач" className="flex w-[38px] items-center justify-center">
        <Icon w={20} h={14}>
          <path d="M4.500.5h11v13h-11zM3 2.500H.5v9H3M17 2.500h2.500v9H17" stroke="#fff" />
        </Icon>
      </button>
      {apps.map((app) => (
        <button
          key={app.name}
          aria-label={app.name}
          className={`flex w-[37px] flex-col items-center ${app.active ? "bg-[#3d4345]" : ""}`}
        >
          <span className="flex flex-1 items-center">
            <Icon>{app.icon}</Icon>
          </span>
          <span className={`h-[2px] ${app.active ? "w-full bg-[#76b9ed]" : app.open ? "w-7 bg-[#76b9ed]" : ""}`} />
        </button>
      ))}
      <div className="ml-auto flex items-center">
        <button aria-label="Люди" className="mr-[14px]">
          <Icon>
            <circle cx="10.500" cy="3.500" r="2.800" stroke="#fff" strokeWidth="1.200" />
            <circle cx="5" cy="8" r="2.500" stroke="#fff" strokeWidth="1.200" />
            <path d="M1 15q0-4 4-4t4 4M9 7.500q5-1.500 6 4" stroke="#fff" strokeWidth="1.200" />
          </Icon>
        </button>
        <button aria-label="Показать скрытые значки" className="mr-[10px]">
          <Icon w={12} h={8}><path d="M1 6.500l5-5 5 5" stroke="#fff" strokeWidth="1.300" /></Icon>
        </button>
        <span className="mr-2">
          <Icon>
            <circle cx="7.500" cy="7.500" r="7.500" fill="#d5121b" />
            <path d="M8 2L5 8q-1 4 3 3M4 5h7" stroke="#fff" strokeWidth="1.500" />
            <circle cx="12" cy="12" r="4" fill="#f09a1d" />
            <path d="M12 9.500v3M12 13.500v1" stroke="#fff" strokeWidth="1.200" />
          </Icon>
        </span>
        <span className="mr-[10px]">
          <Icon>
            <path d="M5.500 5.500h9v7h-9zM15.500 7.500v3M.5 3h4v3h-4zM1.500 1v2M3.500 1v2M2.500 6v5.500h3" stroke="#fff" />
            <path d="M7 7h6v4H7z" fill="#fff" />
          </Icon>
        </span>
        <span className="mr-2">
          <Icon w={14}>
            <path d="M1 15A13 13 0 0 1 13 3M4 15a10 10 0 0 1 9-9" stroke="#888" />
            <path d="M7 15a7 7 0 0 1 6-6M10 15a4 4 0 0 1 3-3" stroke="#fff" />
            <path d="M11 13h2v2h-2z" fill="#fff" />
          </Icon>
        </span>
        <span className="mr-2">
          <Icon w={17}>
            <path d="M1 5.500h3l4-3.500v12L4 10.500H1zM10 5.500q1.500 2.500 0 5" stroke="#fff" />
            <path d="M12.500 3.500q2.500 4.500 0 9M15 2q3 6 0 12" stroke="#888" />
          </Icon>
        </span>
        <span className="mr-[10px]">
          <Icon>
            <path d="M0 8q3-6 8-6 6 1 6 6L5 13q-2-1 0-3z" fill="#e8e8e8" />
            <path d="M3 8q5-4 10-1" stroke="#555" />
            <circle cx="10.500" cy="10.500" r="4.500" fill="#2ea33a" />
            <path d="M8 10.500l2 2 3.500-4" stroke="#fff" strokeWidth="1.500" />
          </Icon>
        </span>
        <span className="mr-3">ENG</span>
        <time className="mr-[14px]">14:17</time>
        <button aria-label="Центр уведомлений" className="mr-[19px]">
          <Icon w={17} h={16}>
            <path d="M0 0h17v13h-6l-3 3v-3H0z" fill="#fff" />
            <path d="M3 3.500h11M3 6.500h11M3 9.500h7" stroke="#0b1012" />
          </Icon>
        </button>
        <div className="mr-1 h-[30px] w-px bg-[#555]" />
      </div>
    </div>
  );
}
